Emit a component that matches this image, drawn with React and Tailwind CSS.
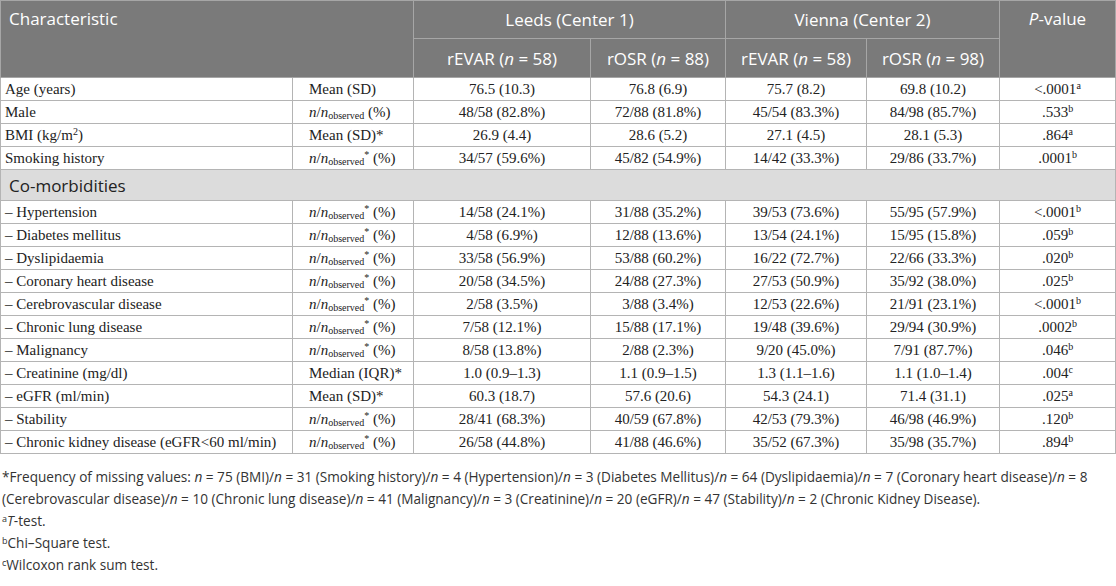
import React from 'react';

const rows = [
  { label: 'Age (years)', stat: 'mean', v: ['76.5 (10.3)', '76.8 (6.9)', '75.7 (8.2)', '69.8 (10.2)'], p: '<.0001', s: 'a' },
  { label: 'Male', stat: 'nobs', v: ['48/58 (82.8%)', '72/88 (81.8%)', '45/54 (83.3%)', '84/98 (85.7%)'], p: '.533', s: 'b' },
  { label: 'BMI', stat: 'mean*', v: ['26.9 (4.4)', '28.6 (5.2)', '27.1 (4.5)', '28.1 (5.3)'], p: '.864', s: 'a' },
  { label: 'Smoking history', stat: 'nobs*', v: ['34/57 (59.6%)', '45/82 (54.9%)', '14/42 (33.3%)', '29/86 (33.7%)'], p: '.0001', s: 'b' },
];

const comorb = [
  { label: '– Hypertension', stat: 'nobs*', v: ['14/58 (24.1%)', '31/88 (35.2%)', '39/53 (73.6%)', '55/95 (57.9%)'], p: '<.0001', s: 'b' },
  { label: '– Diabetes mellitus', stat: 'nobs*', v: ['4/58 (6.9%)', '12/88 (13.6%)', '13/54 (24.1%)', '15/95 (15.8%)'], p: '.059', s: 'b' },
  { label: '– Dyslipidaemia', stat: 'nobs*', v: ['33/58 (56.9%)', '53/88 (60.2%)', '16/22 (72.7%)', '22/66 (33.3%)'], p: '.020', s: 'b' },
  { label: '– Coronary heart disease', stat: 'nobs*', v: ['20/58 (34.5%)', '24/88 (27.3%)', '27/53 (50.9%)', '35/92 (38.0%)'], p: '.025', s: 'b' },
  { label: '– Cerebrovascular disease', stat: 'nobs*', v: ['2/58 (3.5%)', '3/88 (3.4%)', '12/53 (22.6%)', '21/91 (23.1%)'], p: '<.0001', s: 'b' },
  { label: '– Chronic lung disease', stat: 'nobs*', v: ['7/58 (12.1%)', '15/88 (17.1%)', '19/48 (39.6%)', '29/94 (30.9%)'], p: '.0002', s: 'b' },
  { label: '– Malignancy', stat: 'nobs*', v: ['8/58 (13.8%)', '2/88 (2.3%)', '9/20 (45.0%)', '7/91 (87.7%)'], p: '.046', s: 'b' },
  { label: '– Creatinine (mg/dl)', stat: 'median*', v: ['1.0 (0.9–1.3)', '1.1 (0.9–1.5)', '1.3 (1.1–1.6)', '1.1 (1.0–1.4)'], p: '.004', s: 'c' },
  { label: '– eGFR (ml/min)', stat: 'mean*', v: ['60.3 (18.7)', '57.6 (20.6)', '54.3 (24.1)', '71.4 (31.1)'], p: '.025', s: 'a' },
  { label: '– Stability', stat: 'nobs*', v: ['28/41 (68.3%)', '40/59 (67.8%)', '42/53 (79.3%)', '46/98 (46.9%)'], p: '.120', s: 'b' },
  { label: '– Chronic kidney disease (eGFR<60 ml/min)', stat: 'nobs*', v: ['26/58 (44.8%)', '41/88 (46.6%)', '35/52 (67.3%)', '35/98 (35.7%)'], p: '.894', s: 'b' },
];

const Stat = ({ type }) => {
  if (type === 'mean') return <>Mean (SD)</>;
  if (type === 'mean*') return <>Mean (SD)*</>;
  if (type === 'median*') return <>Median (IQR)*</>;
  return (
    <>
      <i>n</i>/<i>n</i>
      <sub className="text-[10px]">observed</sub>
      {type === 'nobs*' && <sup className="text-[10px]">*</sup>} (%)
    </>
  );
};

const td = 'border border-[#b4b4b4] h-[23px] p-0 text-center';

const DataRow = ({ r }) => (
  <tr>
    <td className="border border-[#b4b4b4] h-[23px] py-0 pl-[4px]">
      {r.label === 'BMI' ? (
        <>BMI (kg/m<sup className="text-[10px]">2</sup>)</>
      ) : (
        r.label
      )}
    </td>
    <td className="border border-[#b4b4b4] h-[23px] py-0 pl-[16px]">
      <Stat type={r.stat} />
    </td>
    {r.v.map((x, i) => (
      <td key={i} className={td}>
        {x}
      </td>
    ))}
    <td className={td}>
      {r.p}
      <sup className="text-[10px]">{r.s}</sup>
    </td>
  </tr>
);

const App = () => {
  return (
    <div className="w-[1116px] h-[586px] bg-white overflow-hidden">
      <table className="w-[1115px] border-collapse table-fixed font-['Liberation_Serif',serif] text-[15px] text-[#222] leading-none">
        <colgroup>
          <col className="w-[292px]" />
          <col className="w-[121px]" />
          <col className="w-[177px]" />
          <col className="w-[135px]" />
          <col className="w-[141px]" />
          <col className="w-[133px]" />
          <col className="w-[116px]" />
        </colgroup>
        <thead className="bg-[#7a7a7a] text-white font-['Open_Sans',sans-serif] text-[17px] font-normal">
          <tr>
            <th colSpan={2} rowSpan={2} className="border border-[#a6a6a6] align-top text-left font-normal pl-[8px] pt-[9px]">
              Characteristic
            </th>
            <th colSpan={2} className="border border-[#a6a6a6] h-[38px] font-normal">
              Leeds (Center 1)
            </th>
            <th colSpan={2} className="border border-[#a6a6a6] font-normal">
              Vienna (Center 2)
            </th>
            <th rowSpan={2} className="border border-[#a6a6a6] align-top font-normal pt-[9px]">
              <i>P</i>-value
            </th>
          </tr>
          <tr>
            <th className="border border-[#a6a6a6] h-[39px] font-normal">
              rEVAR (<i>n</i> = 58)
            </th>
            <th className="border border-[#a6a6a6] font-normal">
              rOSR (<i>n</i> = 88)
            </th>
            <th className="border border-[#a6a6a6] font-normal">
              rEVAR (<i>n</i> = 58)
            </th>
            <th className="border border-[#a6a6a6] font-normal">
              rOSR (<i>n</i> = 98)
            </th>
          </tr>
        </thead>
        <tbody>
          {rows.map((r) => (
            <DataRow key={r.label} r={r} />
          ))}
          <tr>
            <td colSpan={7} className="border border-[#b4b4b4] bg-[#dcdcdc] h-[31px] py-0 pl-[8px] font-['Open_Sans',sans-serif] text-[17px] text-[#222]">
              Co-morbidities
            </td>
          </tr>
          {comorb.map((r) => (
            <DataRow key={r.label} r={r} />
          ))}
        </tbody>
      </table>
      <div className="mt-[12px] pl-[2px] font-['Open_Sans',sans-serif] text-[13.6px] leading-[22px] text-[#333]">
        <p className="whitespace-nowrap">
          *Frequency of missing values: <i>n</i> = 75 (BMI)/<i>n</i> = 31 (Smoking history)/<i>n</i> = 4 (Hypertension)/<i>n</i> = 3 (Diabetes Mellitus)/<i>n</i> = 64 (Dyslipidaemia)/<i>n</i> = 7 (Coronary heart disease)/<i>n</i> = 8
        </p>
        <p className="whitespace-nowrap">
          (Cerebrovascular disease)/<i>n</i> = 10 (Chronic lung disease)/<i>n</i> = 41 (Malignancy)/<i>n</i> = 3 (Creatinine)/<i>n</i> = 20 (eGFR)/<i>n</i> = 47 (Stability)/<i>n</i> = 2 (Chronic Kidney Disease).
        </p>
        <p>
          <sup className="text-[9px]">a</sup>
          <i>T</i>-test.
        </p>
        <p>
          <sup className="text-[9px]">b</sup>Chi–Square test.
        </p>
        <p>
          <sup className="text-[9px]">c</sup>Wilcoxon rank sum test.
        </p>
      </div>
    </div>
  );
};

export default App;
